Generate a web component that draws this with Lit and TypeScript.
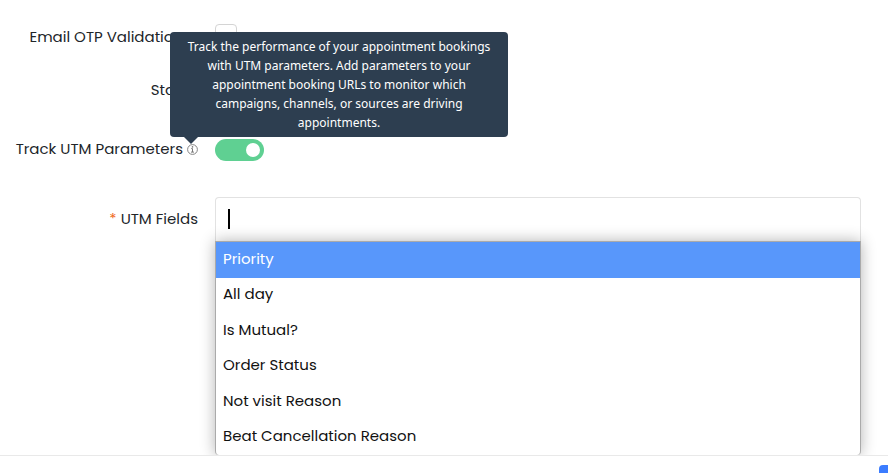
import { LitElement, html, css } from "lit";
import { customElement, state } from "lit/decorators.js";
import { classMap } from "lit/directives/class-map.js";

const FIELDS = [
  "Priority",
  "All day",
  "Is Mutual?",
  "Order Status",
  "Not visit Reason",
  "Beat Cancellation Reason",
];

@customElement("info-icon")
class InfoIcon extends LitElement {
  static styles = css`
    :host {
      display: inline-flex;
    }
    svg {
      width: 11px;
      height: 11px;
      display: block;
    }
  `;
  render() {
    return html`<svg viewBox="0 0 11 11" fill="none" stroke="#777" aria-hidden="true">
      <circle cx="5.5" cy="5.5" r="4.9" stroke-width="0.9" />
      <path d="M4.2 4.6h1.3v3.4M4 8.1h3" stroke-width="1" />
      <circle cx="5.5" cy="2.9" r="0.8" fill="#777" stroke="none" />
    </svg>`;
  }
}

@customElement("app-root")
class AppRoot extends LitElement {
  @state() private selected = 0;

  static styles = css`
    :host {
      display: block;
      height: 100vh;
      overflow: hidden;
      background: #fff;
      color: #212529;
      font: 15px/22px Poppins, Inter, sans-serif;
    }
    * {
      box-sizing: border-box;
    }
    .form {
      display: grid;
      grid-template-columns: 198px 1fr;
      column-gap: 17px;
      padding: 24px 27px 0 0;
    }
    .label {
      display: flex;
      justify-content: flex-end;
      align-items: center;
      gap: 4px;
      height: 26px;
      white-space: nowrap;
    }
    .control {
      display: flex;
      align-items: center;
      height: 26px;
    }
    .row-status {
      margin-top: 27px;
    }
    .row-track {
      margin-top: 33px;
    }
    .row-fields {
      margin-top: 35px;
    }
    .label.row-fields {
      height: 44px;
    }
    .required {
      color: #f06a1d;
    }
    .check {
      appearance: none;
      width: 22px;
      height: 22px;
      margin: 0 0 4px;
      border: 1px solid #d4d4d4;
      border-radius: 4px;
      background: #fff;
    }
    .switch {
      appearance: none;
      display: flex;
      align-items: center;
      justify-content: flex-end;
      width: 49px;
      height: 22px;
      margin: 2px 0 0;
      padding: 4px;
      border-radius: 11px;
      background: #5fd092;
    }
    .switch::before {
      content: "";
      width: 14px;
      height: 14px;
      border-radius: 50%;
      background: #fff;
    }
    .hint {
      position: relative;
      display: inline-flex;
    }
    .tooltip {
      position: absolute;
      z-index: 2;
      left: -17px;
      bottom: 18px;
      width: 338px;
      padding: 5px 14px;
      border-radius: 4px;
      background: #2d3e50;
      color: #fff;
      font: 12px/19px "Noto Sans", sans-serif;
      text-align: center;
      white-space: normal;
    }
    .tooltip::after {
      content: "";
      position: absolute;
      top: 100%;
      left: 14px;
      border: 7px solid transparent;
      border-top-color: #2d3e50;
      border-bottom: 0;
    }
    .entry {
      display: flex;
      align-items: center;
      height: 44px;
      padding-left: 12px;
      border: 1px solid #e2e2e2;
      border-bottom: 0;
      border-radius: 4px 4px 0 0;
    }
    .caret {
      width: 2px;
      height: 20px;
      margin-bottom: 2px;
      background: #000;
    }
    .entry input {
      flex: 1;
      min-width: 0;
      border: 0;
      outline: 0;
      background: none;
      font: inherit;
    }
    .options {
      display: grid;
      grid-auto-rows: 1fr;
      height: 214px;
      margin: 0;
      padding: 0;
      list-style: none;
      border: 1px solid #aaa;
      border-bottom: 0;
      border-radius: 0 0 4px 4px;
      background: #fff;
      color: #111;
      box-shadow: 0 0 15px rgba(0, 0, 0, 0.3);
    }
    .option {
      display: flex;
      align-items: center;
      padding: 0 7px 2px;
      cursor: pointer;
    }
    .option.active {
      background: #5897fb;
      color: #fff;
    }
    .footer {
      position: relative;
      display: flex;
      justify-content: flex-end;
      padding: 9px 0;
      border-top: 1px solid #e9e9e9;
      background: #fff;
    }
    .save {
      flex: none;
      width: 88px;
      height: 36px;
      margin-right: -79px;
      border: 0;
      border-radius: 4px;
      background: #3b7cff;
    }
  `;

  render() {
    return html`
      <form class="form">
        <label class="label" for="otp">Email OTP Validation <info-icon></info-icon></label>
        <div class="control"><input class="check" id="otp" type="checkbox" /></div>

        <div class="label row-status">Status</div>
        <div class="control row-status"></div>

        <div class="label row-track">
          <label for="track">Track UTM Parameters</label>
          <span class="hint">
            <info-icon></info-icon>
            <span class="tooltip" role="tooltip">Track the performance of your appointment bookings with UTM parameters. Add parameters to your appointment booking URLs to monitor which campaigns, channels, or sources are driving appointments.</span>
          </span>
        </div>
        <div class="control row-track">
          <input class="switch" id="track" type="checkbox" role="switch" checked />
        </div>

        <label class="label row-fields" for="fields"><span class="required">*</span>UTM Fields</label>
        <div class="row-fields">
          <div class="entry">
            <span class="caret"></span>
            <input id="fields" type="text" autocomplete="off" />
          </div>
          <ul class="options" role="listbox" aria-label="UTM Fields">
            ${FIELDS.map(
              (name, i) => html`<li
                class=${classMap({ option: true, active: i === this.selected })}
                role="option"
                aria-selected=${i === this.selected}
                @mouseenter=${() => (this.selected = i)}
              >${name}</li>`
            )}
          </ul>
        </div>
      </form>
      <footer class="footer"><button class="save" type="button" aria-label="Save"></button></footer>
    `;
  }
}
